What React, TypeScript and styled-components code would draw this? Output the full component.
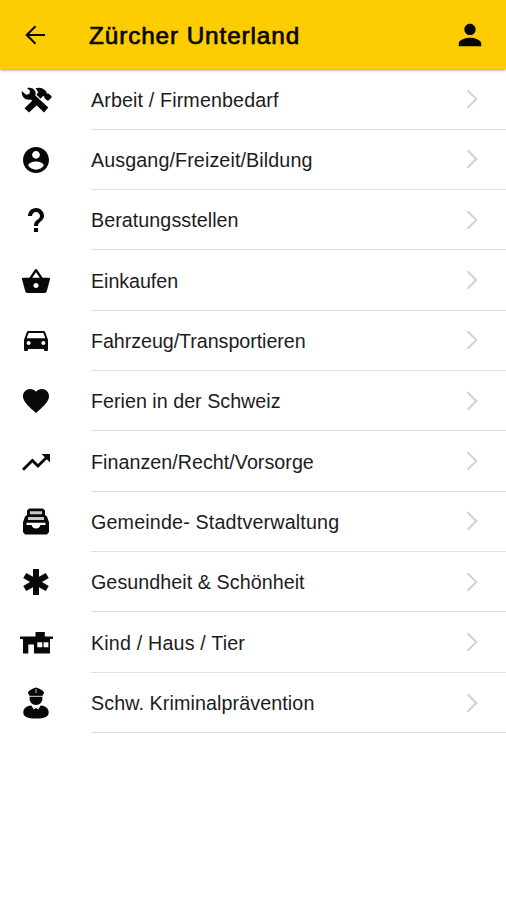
import React from 'react';
import styled, { createGlobalStyle } from 'styled-components';
import {
  IoMdPerson, IoMdContact, IoMdHelp, IoMdBasket, IoMdCar,
  IoMdHeart, IoMdTrendingUp, IoMdMedical,
} from 'react-icons/io';

const GlobalStyle = createGlobalStyle`
  * { box-sizing: border-box; }
  html, body, #root { height: 100%; }
  body { margin: 0; background: #fff; overflow: hidden; font-family: "Liberation Sans", Arial, sans-serif; }
`;

const Screen = styled.div`
  display: flex;
  flex-direction: column;
  height: 100%;
`;

const Header = styled.header`
  display: flex;
  align-items: center;
  flex: none;
  height: 69px;
  padding: 1px 21px 0 25px;
  background: #fdcc01;
  color: #080600;
  box-shadow: 0 1px 3px rgba(0, 0, 0, 0.45);
  z-index: 1;
`;

const HeaderButton = styled.button`
  display: flex;
  padding: 0;
  border: 0;
  background: none;
  color: inherit;
`;

const Title = styled.h1`
  flex: 1;
  margin: 0 0 0 44px;
  padding-top: 2px;
  font-size: 24.3px;
  line-height: 30px;
  font-weight: 400;
  letter-spacing: 0.9px;
  -webkit-text-stroke: 0.7px currentColor;
  white-space: nowrap;
`;

const List = styled.ul`
  margin: 0;
  padding: 0.4px 0 0;
  list-style: none;
`;

const Row = styled.li`
  display: flex;
  height: 60.35px;
`;

const IconCell = styled.span`
  display: flex;
  align-items: center;
  justify-content: center;
  width: 72px;
  margin-right: 19px;
  color: #080808;
`;

const RowBody = styled.div`
  display: flex;
  flex: 1;
  align-items: center;
  justify-content: space-between;
  padding-right: 28px;
  border-bottom: 1px solid #dfdfdf;
`;

const Label = styled.span<{ $spacing: number }>`
  padding-top: 1px;
  font-size: 19.7px;
  line-height: 24px;
  letter-spacing: ${(p) => p.$spacing}px;
  color: #1c1c1c;
  white-space: nowrap;
`;

const BackArrow = () => (
  <svg width="20" height="20" viewBox="0 0 20 20" fill="none" stroke="currentColor" strokeWidth="2">
    <path d="M20 10H2M10.500 1.200L1.700 10l8.800 8.800" />
  </svg>
);

const Chevron = () => (
  <svg width="12" height="20" viewBox="0 0 12 20" fill="none" stroke="#d2d2d2" strokeWidth="2">
    <path d="M1.500 1.200L10.300 10l-8.800 8.800" />
  </svg>
);

const Tools = () => (
  <svg width="31" height="26" viewBox="0 0 31 26" fill="currentColor">
    <path d="M.8 4L5 7.800l3.300-.8.8-3L6 1C9.500.2 12.700 1.200 14.200 4.200c.7 1.500.5 3 .1 4.300L27.300 20.500 23 25.500 9.800 12.500C5 13.500.2 10.500.8 4Z" />
    <path d="M14.500 1.300C19-.2 22.500 1 25 4.200L26 6.500l2 .2L31 10l-4 4-3.500-2.800V9.700L22 9l-2.500 2.700-4-4 1.700-2.500Z" />
    <path d="M11.800 13.200l4.700 4.300L8 25.500 3.500 21.200Z" />
  </svg>
);

const Filing = () => (
  <svg width="28" height="27" viewBox="0 0 28 27" fill="currentColor">
    <path d="M7 .5h14l2 2v4.500l2 1.500 2 6V24l-2 2.500H3L1 24V14.500l2-6L5 7V2.500Z" />
    <path d="M8 3.200h12v3H8ZM6 9h16v3H6Z" fill="#c9c9c9" />
    <path d="M4.500 14.800h19v2.200h-5c-.7 2.300-2.300 3.600-4.500 3.600S10.200 19.300 9.500 17h-5Z" fill="#fff" />
  </svg>
);

const House = () => (
  <svg width="33" height="22" viewBox="0 0 33 22" fill="currentColor">
    <path d="M15.500 0h9.300v4.500H33V7H0V4.500h15.500Z" />
    <path fillRule="evenodd" d="M3 7h27v14.500H14V12.500H8.300v9H3ZM17.300 10.200v5h5v-5Zm6.300 0v5h4.800v-5Z" />
  </svg>
);

const Officer = () => (
  <svg width="26" height="32" viewBox="0 0 26 32" fill="currentColor">
    <path d="M4.800 5.500C7 2.500 10 1.500 13 .5c3 1 6 2 8.200 5L19.300 9H6.700Z" />
    <path d="M6.700 9.500h12.600c.8 5.500-2.500 8.500-6.300 8.500s-7.100-3-6.300-8.500Z" />
    <path d="M8 18.500l5 3 5-3c5 .8 7.700 3 7.700 7 0 4-4 6-12.700 6S.3 29.500.3 25.500c0-4 2.700-6.200 7.700-7Z" />
    <path d="M9 18l2.500 4M17 18l-2.500 4" stroke="#fff" strokeWidth="1.500" />
    <path d="M13 2v4M7 9.300h12" stroke="#bbb" strokeWidth="1" />
  </svg>
);

const rows = [
  { label: 'Arbeit / Firmenbedarf', spacing: 0.13, icon: <Tools /> },
  { label: 'Ausgang/Freizeit/Bildung', spacing: 0.11, icon: <IoMdContact size={32} /> },
  { label: 'Beratungsstellen', spacing: 0.06, icon: <IoMdHelp size={32} /> },
  { label: 'Einkaufen', spacing: -0.06, icon: <IoMdBasket size={32} /> },
  { label: 'Fahrzeug/Transportieren', spacing: -0.06, icon: <IoMdCar size={32} /> },
  { label: 'Ferien in der Schweiz', spacing: 0.01, icon: <IoMdHeart size={32} /> },
  { label: 'Finanzen/Recht/Vorsorge', spacing: 0.03, icon: <IoMdTrendingUp size={32} /> },
  { label: 'Gemeinde- Stadtverwaltung', spacing: 0.17, icon: <Filing /> },
  { label: 'Gesundheit & Schönheit', spacing: 0.06, icon: <IoMdMedical size={32} /> },
  { label: 'Kind / Haus / Tier', spacing: 0.17, icon: <House /> },
  { label: 'Schw. Kriminalprävention', spacing: 0.1, icon: <Officer /> },
];

export default function App() {
  return (
    <Screen>
      <GlobalStyle />
      <Header>
        <HeaderButton aria-label="Zurück"><BackArrow /></HeaderButton>
        <Title>Zürcher Unterland</Title>
        <HeaderButton aria-label="Profil"><IoMdPerson size={30} /></HeaderButton>
      </Header>
      <List>
        {rows.map((row) => (
          <Row key={row.label}>
            <IconCell>{row.icon}</IconCell>
            <RowBody>
              <Label $spacing={row.spacing}>{row.label}</Label>
              <Chevron />
            </RowBody>
          </Row>
        ))}
      </List>
    </Screen>
  );
}
